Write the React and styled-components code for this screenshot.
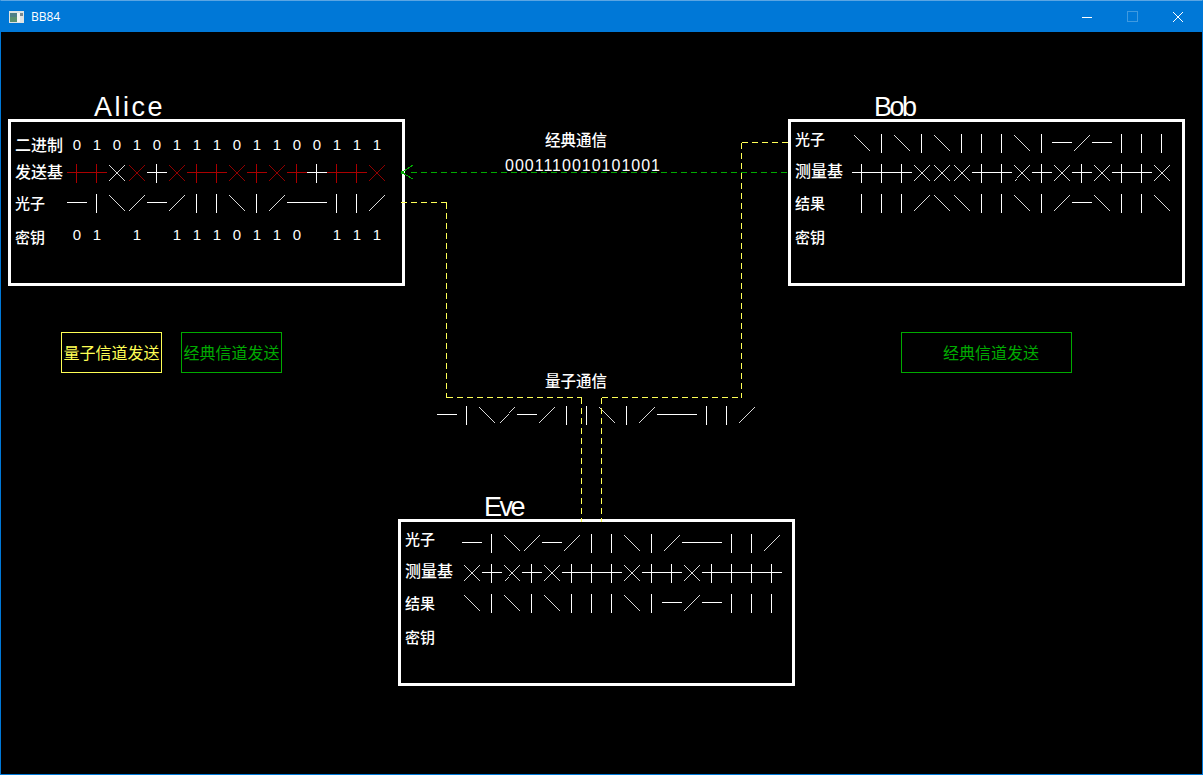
import styled, { createGlobalStyle } from "styled-components"

const ALICE_BITS = "0101011101100111".split("")
const ALICE_KEY = "01 1 1110110 111".split("")
const ALICE_BASES = "++xx+x++x+x++++x".split("")
const ALICE_BASE_COLORS = "rrwrwrrrrrrrwrrr".split("")
const PHOTONS = "-|\\/-/||\\|/--||/".split("")
const BOB_PHOTONS = "\\|\\|\\|||\\|-/-|||".split("")
const BOB_BASES = "+++xxx++x+x+x++x".split("")
const BOB_RESULT = "|||/\\\\||\\|/-\\||\\".split("")
const EVE_BASES = "x+x+x+++x++x++++".split("")

const COLORS = { r: "#aa0000", w: "#ffffff" }

const Symbol = ({ kind, color = "#ffffff" }) => (
  <SymbolSvg viewBox="0 0 20 20" stroke={color}>
    {(kind === "-" || kind === "+") && <line x1="0" y1="9.5" x2="19.5" y2="9.5" />}
    {(kind === "|" || kind === "+") && <line x1="9.5" y1="0.5" x2="9.5" y2="20" />}
    {(kind === "\\" || kind === "x") && <Diagonal x1="2" y1="2" x2="17.5" y2="17.5" />}
    {(kind === "/" || kind === "x") && <Diagonal x1="17.5" y1="2" x2="2" y2="17.5" />}
  </SymbolSvg>
)

const Symbols = ({ items, colors }) => (
  <Cells>
    {items.map((kind, i) => (
      <Symbol key={i} kind={kind} color={colors ? COLORS[colors[i]] : undefined} />
    ))}
  </Cells>
)

const Digits = ({ items }) => (
  <Cells>
    {items.map((d, i) => <Digit key={i}>{d}</Digit>)}
  </Cells>
)

const Wires = () => (
  <WireLayer viewBox="0 0 1203 775">
    <path
      d="M401 202.5H446.5M446.5 202.5V397.5M446.5 397.5H581.5M581.5 397.5V522"
      stroke="#ffff55"
      strokeDasharray="6 4"
    />
    <path
      d="M741.5 142.5H789M741.5 142.5V397.5M601.5 397.5H741.5M601.5 397.5V522"
      stroke="#ffff55"
      strokeDasharray="6 4"
    />
    <path d="M411 172.5H790" stroke="#00aa00" strokeDasharray="6 4" />
    <path d="M413 165L402 172.5L413 179" stroke="#00aa00" />
    <rect x="401" y="171" width="3" height="3" fill="#00aa00" />
  </WireLayer>
)

const ReceiverRows = ({ items }) => (
  <Rows $top={6}>
    <Row $height={30}>
      <Label $wide={57} $shift={-4}>光子</Label>
      <Symbols items={items[0]} />
    </Row>
    <Row $height={30}>
      <Label $wide={57} $size={16} $shift={-3}>测量基</Label>
      <Symbols items={items[1]} />
    </Row>
    <Row $height={30}>
      <Label $wide={57}>结果</Label>
      <Symbols items={items[2]} />
    </Row>
    <Row $height={42}>
      <Label $wide={57} $shift={-2}>密钥</Label>
    </Row>
  </Rows>
)

const App = () => {
  return <Window>
    <GlobalStyle />
    <TitleBar>
      <AppIcon viewBox="0 0 15 12">
        <rect width="15" height="12" fill="#dfe4e4" />
        <rect x="1" y="2" width="7" height="9" fill="#4f8088" />
        <rect x="1" y="6" width="7" height="5" fill="#5a9070" />
        <rect x="8" y="2" width="3" height="9" fill="#f4f6f6" />
        <rect x="11" y="2" width="3" height="3" fill="#7a8a90" />
      </AppIcon>
      <WindowTitle>BB84</WindowTitle>
      <WindowButtons>
        <WindowButton viewBox="0 0 10 10" stroke="#ffffff">
          <path d="M0 5.5H10" />
        </WindowButton>
        <WindowButton $size={11} viewBox="0 0 11 11" stroke="#3f9ae0">
          <rect x="0.5" y="0.5" width="10" height="10" />
        </WindowButton>
        <WindowButton viewBox="0 0 10 10" stroke="#ffffff">
          <path d="M0 0L10 10M10 0L0 10" />
        </WindowButton>
      </WindowButtons>
    </TitleBar>

    <Canvas>
      <TopRow>
        <Station>
          <Name $spacing={2.5}>Alice</Name>
          <Panel>
            <Rows $top={8}>
              <Row $height={30}>
                <Label $wide={52} $size={16} $shift={-1}>二进制</Label>
                <Digits items={ALICE_BITS} />
              </Row>
              <Row $height={26}>
                <Label $wide={52} $size={16} $shift={-2}>发送基</Label>
                <Symbols items={ALICE_BASES} colors={ALICE_BASE_COLORS} />
              </Row>
              <Row $height={34}>
                <Label $wide={52}>光子</Label>
                <Symbols items={PHOTONS} />
              </Row>
              <Row $height={30}>
                <Label $wide={52} $shift={2}>密钥</Label>
                <Digits items={ALICE_KEY} />
              </Row>
            </Rows>
          </Panel>
          <Buttons $left={53}>
            <SendButton $color="#ffff55">量子信道发送</SendButton>
            <SendButton $color="#00aa00">经典信道发送</SendButton>
          </Buttons>
        </Station>

        <Channels>
          <ChannelTitle>经典通信</ChannelTitle>
          <CipherText>0001110010101001</CipherText>
          <ChannelTitle $gap={196}>量子通信</ChannelTitle>
          <PhotonStream>
            <Symbols items={PHOTONS} />
          </PhotonStream>
        </Channels>

        <Station>
          <Name $spacing={-2.5}>Bob</Name>
          <Panel>
            <ReceiverRows items={[BOB_PHOTONS, BOB_BASES, BOB_RESULT]} />
          </Panel>
          <Buttons $left={113}>
            <SendButton $color="#00aa00" $wide={171} $indent={9}>经典信道发送</SendButton>
          </Buttons>
        </Station>
      </TopRow>

      <EveRow>
        <Station>
          <Name $spacing={-2.5} $height={50}>Eve</Name>
          <Panel>
            <ReceiverRows items={[PHOTONS, EVE_BASES, BOB_PHOTONS]} />
          </Panel>
        </Station>
      </EveRow>

      <Wires />
    </Canvas>
  </Window>;
};

export default App;

const GlobalStyle = createGlobalStyle`
  html, body {
    margin: 0;
    padding: 0;
    background: #000;
  }
`

const Window = styled.div`
  width: 1203px;
  height: 775px;
  box-sizing: border-box;
  display: flex;
  flex-direction: column;
  border: 1px solid #0078d7;
  border-top-color: #5aa5e3;
  background: #000;
  overflow: hidden;
`

const TitleBar = styled.div`
  height: 31px;
  flex: none;
  display: flex;
  align-items: center;
  padding-left: 8px;
  background: #0078d7;
`

const AppIcon = styled.svg`
  width: 15px;
  height: 12px;
  margin-right: 7px;
`

const WindowTitle = styled.span`
  color: #fff;
  font-family: "Open Sans", sans-serif;
  font-size: 12px;
`

const WindowButtons = styled.div`
  margin-left: auto;
  display: flex;
  align-items: center;
  gap: 35px;
  padding-right: 19px;
`

const WindowButton = styled.svg`
  width: ${(p) => p.$size || 10}px;
  height: ${(p) => p.$size || 10}px;
  fill: none;
  shape-rendering: crispEdges;
`

const Canvas = styled.main`
  position: relative;
  flex: 1;
  font-family: "Noto Sans CJK SC", sans-serif;
  color: #fff;
`

const TopRow = styled.div`
  height: 437px;
  display: flex;
  padding-left: 7px;
`

const EveRow = styled.div`
  padding-left: 397px;
`

const Station = styled.section`
  width: 397px;
  flex: none;
`

const Name = styled.h2`
  margin: 0;
  box-sizing: border-box;
  height: ${(p) => p.$height || 87}px;
  display: flex;
  align-items: flex-end;
  padding: 0 0 1px 86px;
  font-family: "Liberation Sans", sans-serif;
  font-size: 27px;
  font-weight: 400;
  line-height: 21px;
  letter-spacing: ${(p) => p.$spacing}px;
`

const Panel = styled.div`
  box-sizing: border-box;
  width: 397px;
  height: 167px;
  border: 3px solid #fff;
`

const Rows = styled.div`
  padding-top: ${(p) => p.$top}px;
`

const Row = styled.div`
  height: ${(p) => p.$height}px;
  display: flex;
  align-items: center;
  padding-left: 4px;
`

const Label = styled.span`
  width: ${(p) => p.$wide}px;
  flex: none;
  font-size: ${(p) => p.$size || 15}px;
  line-height: 20px;
  font-weight: 500;
  white-space: nowrap;
  transform: translateY(${(p) => p.$shift || 0}px);
`

const Cells = styled.div`
  display: flex;
`

const SymbolSvg = styled.svg`
  width: 20px;
  height: 20px;
  flex: none;
  overflow: visible;
  shape-rendering: crispEdges;
`

const Diagonal = styled.line`
  stroke-width: 0.85;
`

const Digit = styled.span`
  width: 20px;
  flex: none;
  text-align: center;
  font-family: "Liberation Sans", sans-serif;
  font-size: 15px;
  line-height: 20px;
`

const Buttons = styled.div`
  display: flex;
  gap: 19px;
  margin-top: 46px;
  padding-left: ${(p) => p.$left}px;
`

const SendButton = styled.div`
  box-sizing: border-box;
  width: ${(p) => p.$wide || 101}px;
  height: 41px;
  padding: 0 0 2px ${(p) => p.$indent || 0}px;
  display: flex;
  align-items: center;
  justify-content: center;
  border: 1px solid ${(p) => p.$color};
  color: ${(p) => p.$color};
  font-size: 16px;
  white-space: nowrap;
`

const Channels = styled.section`
  width: 383px;
  flex: none;
  padding-top: 97px;
`

const ChannelTitle = styled.div`
  margin: ${(p) => p.$gap || 0}px 0 0 140px;
  font-size: 15.5px;
  font-weight: 500;
  line-height: 20px;
`

const CipherText = styled.div`
  margin: 9px 0 0 100px;
  font-family: "Liberation Sans", sans-serif;
  font-size: 16px;
  line-height: 16px;
  letter-spacing: 1px;
`

const PhotonStream = styled.div`
  margin: 15px 0 0 32px;
`

const WireLayer = styled.svg`
  position: absolute;
  left: -1px;
  top: -32px;
  width: 1203px;
  height: 775px;
  fill: none;
  pointer-events: none;
  shape-rendering: crispEdges;
`
